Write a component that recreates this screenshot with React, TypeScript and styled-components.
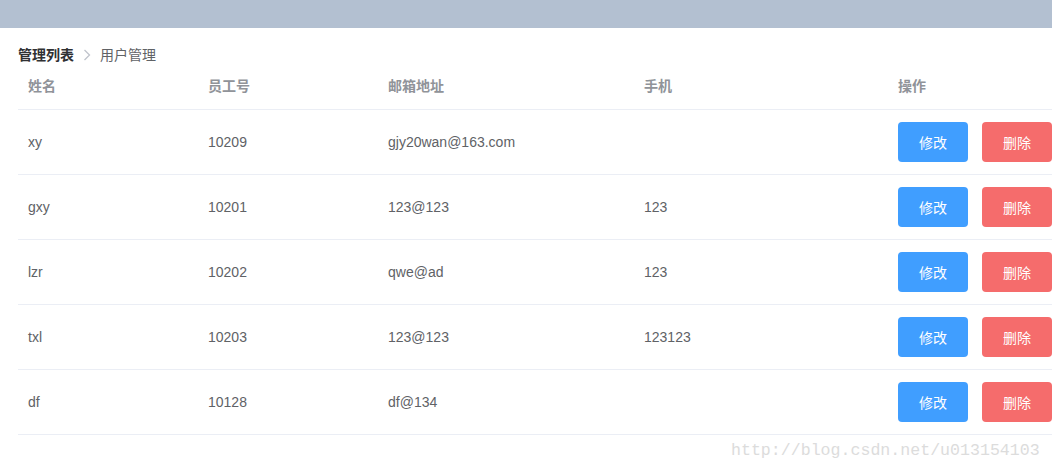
import React from "react";
import styled, { createGlobalStyle } from "styled-components";

const GlobalStyle = createGlobalStyle`
  html, body {
    margin: 0;
    padding: 0;
    background: #fff;
    overflow: hidden;
  }
  body {
    font-family: "Liberation Sans", "Noto Sans CJK SC", sans-serif;
    font-size: 14px;
  }
`;

const Page = styled.div`
  position: relative;
  width: 1052px;
  height: 471px;
  overflow: hidden;
`;

const TopBar = styled.div`
  height: 28px;
  background-color: #b3c0d1;
`;

const Main = styled.div`
  padding: 20px 0 0 18px;
`;

const Breadcrumb = styled.div`
  display: flex;
  align-items: center;
  height: 14px;
  line-height: 14px;
  font-size: 14px;
`;

const Crumb = styled.span<{ $strong?: boolean }>`
  color: ${(p) => (p.$strong ? "#303133" : "#606266")};
  font-weight: ${(p) => (p.$strong ? 700 : 400)};
`;

const Separator = styled.span`
  display: flex;
  align-items: center;
  margin: 0 9px;
`;

const Table = styled.div`
  width: 1060px;
`;

const Row = styled.div<{ $head?: boolean }>`
  display: grid;
  grid-template-columns: 180px 180px 256px 254px 1fr;
  align-items: center;
  height: ${(p) => (p.$head ? 48 : 65)}px;
  border-bottom: 1px solid #ebeef5;
  box-sizing: border-box;
`;

const Cell = styled.div<{ $head?: boolean }>`
  padding: ${(p) => (p.$head ? "0 10px 2px" : "0 10px")};
  color: ${(p) => (p.$head ? "#909399" : "#606266")};
  font-weight: ${(p) => (p.$head ? 700 : 400)};
  white-space: nowrap;
`;

const Actions = styled.div`
  display: flex;
  gap: 14px;
  padding: 0 10px;
`;

const Button = styled.button<{ $danger?: boolean }>`
  width: 70px;
  height: 40px;
  border: none;
  border-radius: 4px;
  background-color: ${(p) => (p.$danger ? "#f56c6c" : "#409eff")};
  color: #fff;
  font-family: inherit;
  font-size: 14px;
  padding: 0;
  cursor: pointer;
`;

const Watermark = styled.div`
  position: absolute;
  left: 731px;
  top: 441px;
  font-family: "Liberation Mono", monospace;
  font-size: 16.6px;
  color: #dcdcdc;
`;

type User = { name: string; no: string; email: string; phone: string };

const users: User[] = [
  { name: "xy", no: "10209", email: "gjy20wan@163.com", phone: "" },
  { name: "gxy", no: "10201", email: "123@123", phone: "123" },
  { name: "lzr", no: "10202", email: "qwe@ad", phone: "123" },
  { name: "txl", no: "10203", email: "123@123", phone: "123123" },
  { name: "df", no: "10128", email: "df@134", phone: "" },
];

export default function App() {
  return (
    <Page>
      <GlobalStyle />
      <TopBar />
      <Main>
        <Breadcrumb>
          <Crumb $strong>管理列表</Crumb>
          <Separator>
            <svg width="8" height="12" viewBox="0 0 8 12">
              <path d="M1.5 1l5 5-5 5" fill="none" stroke="#c0c4cc" strokeWidth="1.3" />
            </svg>
          </Separator>
          <Crumb>用户管理</Crumb>
        </Breadcrumb>
        <Table>
          <Row $head>
            <Cell $head>姓名</Cell>
            <Cell $head>员工号</Cell>
            <Cell $head>邮箱地址</Cell>
            <Cell $head>手机</Cell>
            <Cell $head>操作</Cell>
          </Row>
          {users.map((u) => (
            <Row key={u.no}>
              <Cell>{u.name}</Cell>
              <Cell>{u.no}</Cell>
              <Cell>{u.email}</Cell>
              <Cell>{u.phone}</Cell>
              <Actions>
                <Button>修改</Button>
                <Button $danger>删除</Button>
              </Actions>
            </Row>
          ))}
        </Table>
      </Main>
      <Watermark>http://blog.csdn.net/u013154103</Watermark>
    </Page>
  );
}
